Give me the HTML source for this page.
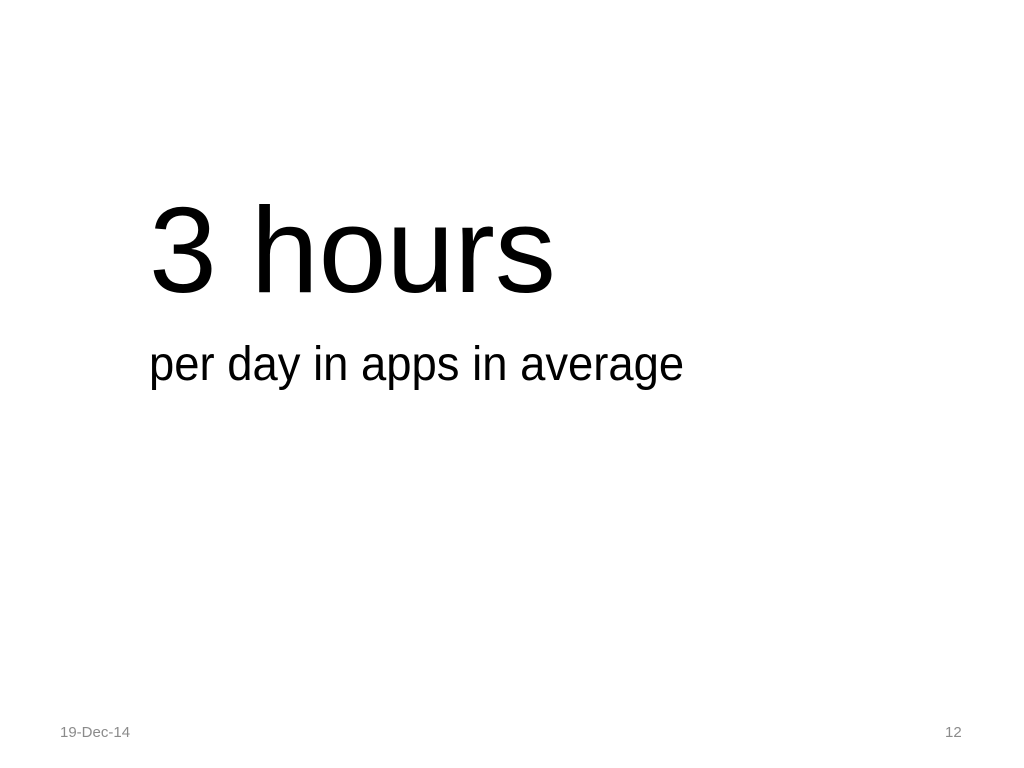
<!DOCTYPE html>
<html><head><style>
body{margin:0;width:1024px;height:768px;background:#fff;position:relative;overflow:hidden;font-family:"Liberation Sans",sans-serif;}
.t{position:absolute;white-space:nowrap;transform-origin:0 0;color:#000;}
</style></head><body>
<div class="t" style="left:149px;top:180px;font-size:122px;line-height:140px;">3 hours</div>
<div class="t" style="left:149px;top:337px;font-size:48px;line-height:56px;transform:scaleX(0.946)">per day in apps in average</div>
<div class="t" style="left:60px;top:724px;font-size:15px;line-height:18px;color:#8b8b8b">19-Dec-14</div>
<div class="t" style="left:945px;top:724px;font-size:15px;line-height:18px;color:#8b8b8b">12</div>
</body></html>
